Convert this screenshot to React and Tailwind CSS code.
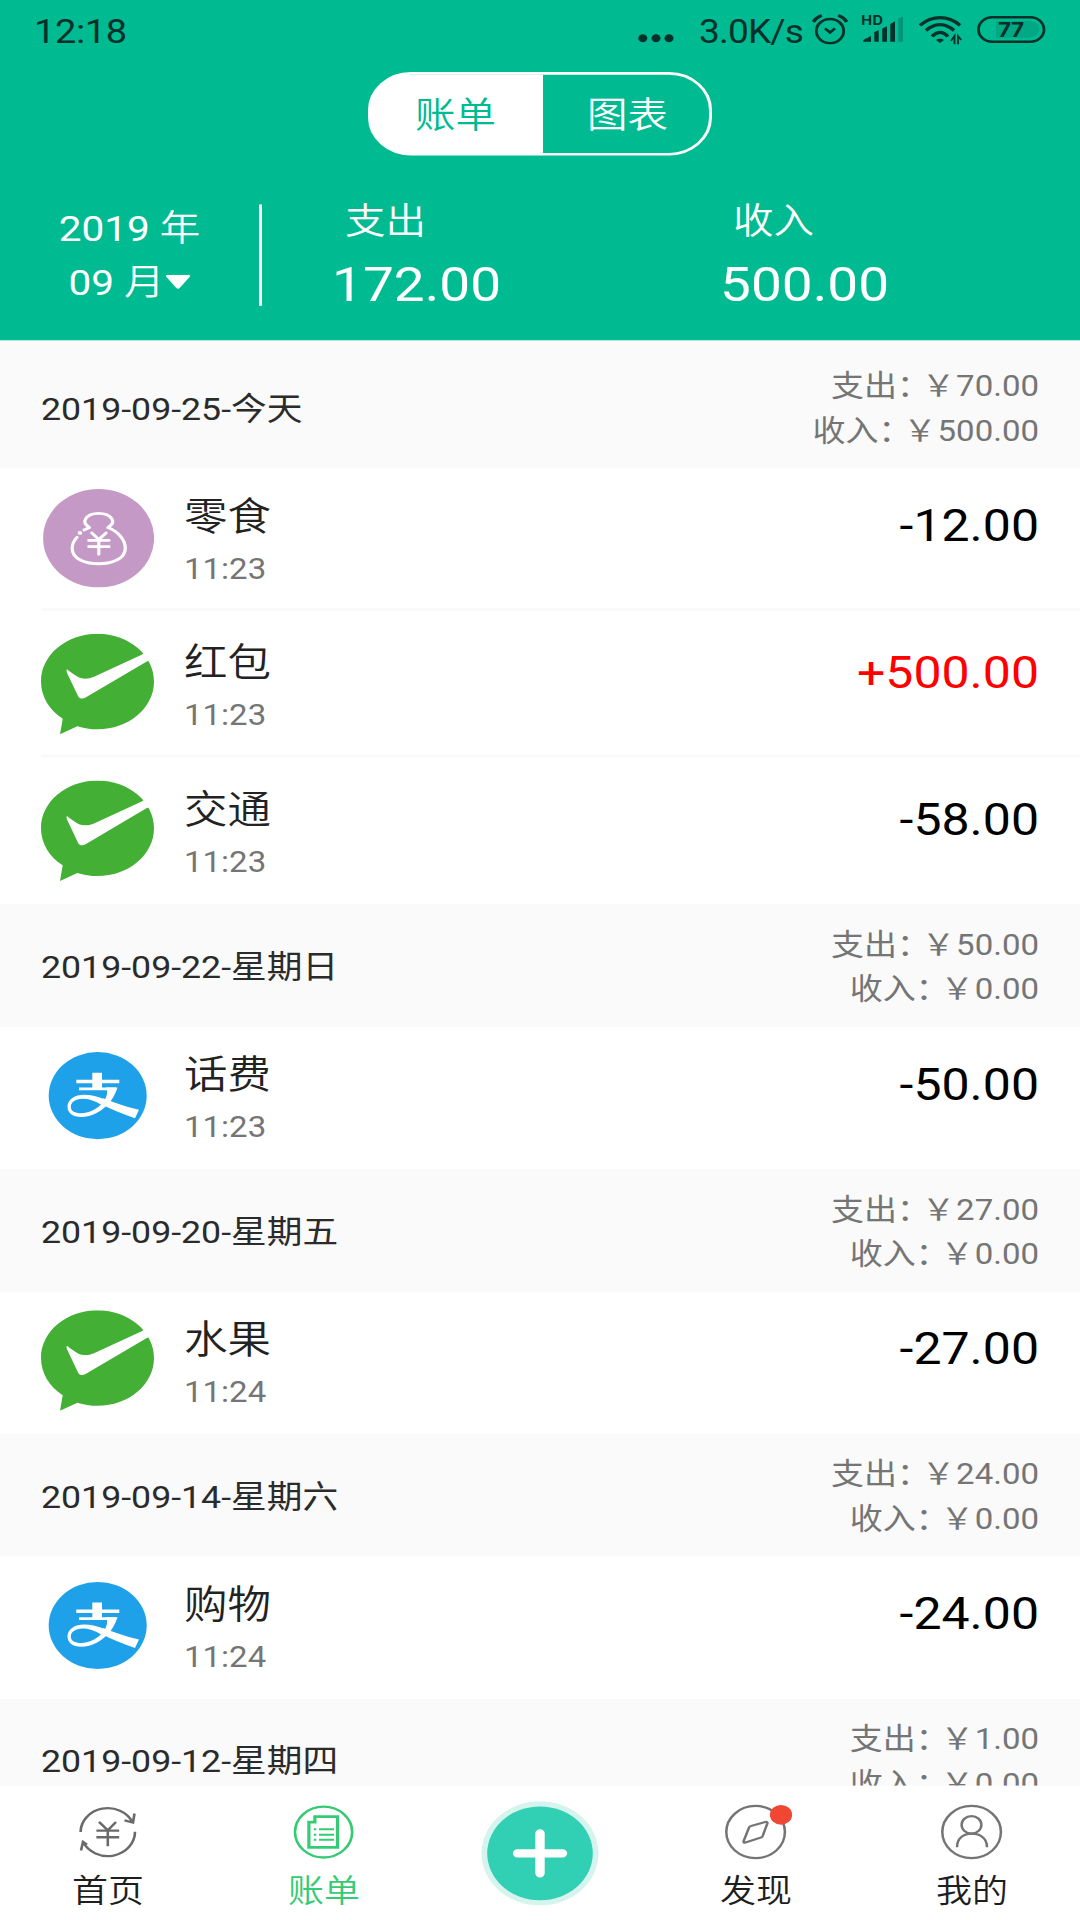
import React from "react";

const GROUPS = [
  {
    date: "2019-09-25-今天",
    expense: "70.00",
    income: "500.00",
    items: [
      { icon: "bag", name: "零食", time: "11:23", amount: "-12.00" },
      { icon: "wechat", name: "红包", time: "11:23", amount: "+500.00" },
      { icon: "wechat", name: "交通", time: "11:23", amount: "-58.00" },
    ],
  },
  {
    date: "2019-09-22-星期日",
    expense: "50.00",
    income: "0.00",
    items: [{ icon: "alipay", name: "话费", time: "11:23", amount: "-50.00" }],
  },
  {
    date: "2019-09-20-星期五",
    expense: "27.00",
    income: "0.00",
    items: [{ icon: "wechat", name: "水果", time: "11:24", amount: "-27.00" }],
  },
  {
    date: "2019-09-14-星期六",
    expense: "24.00",
    income: "0.00",
    items: [{ icon: "alipay", name: "购物", time: "11:24", amount: "-24.00" }],
  },
  {
    date: "2019-09-12-星期四",
    expense: "1.00",
    income: "0.00",
    items: [],
  },
];

function BagIcon() {
  return (
    <svg className="size-[113px]" viewBox="0 0 113 113" fill="none">
      <circle cx="57.6" cy="57.5" r="55.5" fill="#c599c5" />
      <g stroke="#fff" strokeWidth="3.2" strokeLinecap="round" strokeLinejoin="round">
        <path d="M43 48.3L48.5 45.5C44.5 42.5 42.5 39.5 44.5 36C47 31.5 52 29.6 57.5 29.6C63 29.6 68.5 31.5 71 36C73 39.5 71 42.5 66.8 45.5C77 50 84.3 58.5 84.3 69C84.3 80 72 86.2 57.5 86.2C43 86.2 31.2 80 31.2 69C31.2 64 32.8 60 36 56.5" />
        <path d="M38.8 51.6h.2" strokeWidth="4.2" />
        <path d="M50.8 51.5L57.8 59L65 51.5M47.8 60H68M47.8 67H68M57.8 59V75.5" />
      </g>
    </svg>
  );
}

function WechatIcon() {
  return (
    <svg className="size-[113px]" viewBox="0 0 113 113">
      <path
        d="M56.5 0C87.7 0 113 24 113 53.7S87.7 107.5 56.5 107.5C49.5 107.5 42.5 106.3 36.3 104L19 113L21.7 95.5C8.5 86 0 71 0 53.7C0 24 25.3 0 56.5 0Z"
        fill="#43af35"
      />
      <path
        d="M26.3 40.3C30 43.5 34 47 38 49.2C42 51.2 48 50.8 53 48.3L102.3 22.7L107.5 30L45 71.5C41.5 73.8 38.5 73.3 37 70L26 44C25.3 42 25.3 40 26.3 40.3Z"
        fill="#fff"
      />
      <path d="M101 23.4L113 17V26.5L106 31Z" fill="#fff" />
    </svg>
  );
}

function AlipayIcon() {
  return (
    <svg className="size-[113px]" viewBox="0 0 113 113" fill="none">
      <circle cx="56.7" cy="56.6" r="49" fill="#1ea1e8" />
      <path d="M51.3 30.7H61V49H51.3ZM35.3 38.6H78.3V42.7H35.3ZM38 47.4H75V50.6H38Z" fill="#fff" />
      <path d="M65 47.5H76.5C74 56 71 61 68.5 64.5C61 74 51 80.5 40 80.5C32 80.5 26.5 76 26.5 69C26.5 60.5 34 55.5 43 55.5C50 55.5 57 57.5 64 60.8C66 56.5 67 52 65 47.5Z" fill="#fff" />
      <path d="M60 66.5C53 62 47 59.8 41.5 60C34 60.2 29.8 64 29.8 69C29.8 74 34 76.3 40 76.3C48 76.3 54.5 72.5 60 66.5Z" fill="#1ea1e8" />
      <path d="M62 59.5C72 64 84 69 98 72.5L94 82C82 77.5 70 72 59 65.5Z" fill="#fff" />
    </svg>
  );
}

const ICONS = { bag: BagIcon, wechat: WechatIcon, alipay: AlipayIcon };

function StatusBar() {
  return (
    <div className="flex h-[66px] items-center pr-[34px] pl-[34px] text-[38px] leading-none text-[#04302a]">
      <span className="mt-[4px] tracking-[-0.4px]">12:18</span>
      <div className="ml-auto flex items-center">
        <svg className="mt-[19px] mr-[25px] h-[10px] w-[36px]" viewBox="0 0 36 10" fill="currentColor">
          <circle cx="4.8" cy="5" r="4.5" />
          <circle cx="18" cy="5" r="4.5" />
          <circle cx="31" cy="5" r="4.5" />
        </svg>
        <span className="mt-[4px] mr-[7px] w-[106px] text-[37px] tracking-[-0.8px] whitespace-nowrap">3.0K/s</span>
        <svg className="h-[34px] w-[36px]" viewBox="0 0 36 34" fill="none" stroke="currentColor" strokeWidth="2.8">
          <circle cx="18" cy="19" r="13.7" />
          <path d="M13 16L18 20.6L23 16" />
          <path d="M1.2 8.7C3 5.5 6 2.8 9.8 1.3M34.8 8.7C33 5.5 30 2.8 26.2 1.3" strokeWidth="3.4" />
        </svg>
        <svg className="ml-[13px] h-[34px] w-[43px] overflow-visible" viewBox="0 0 43 34" fill="currentColor">
          <text x="0.3" y="12.3" fontSize="14.5" fontWeight="700" letterSpacing="0.5" fontFamily="Inter, sans-serif">HD</text>
          <path d="M2.3 31V29L10 24.5V31ZM13.3 31V20L17.7 18V31ZM21.3 31V16L26 13.5V31ZM29.3 31V11L34 8V31Z" />
          <path d="M37.3 31V5L42 2.5V31Z" opacity="0.28" />
        </svg>
        <svg className="ml-[15px] h-[34px] w-[43px]" viewBox="0 0 43 34" fill="none" stroke="currentColor" strokeWidth="3.6">
          <path d="M1 12.5C13 1 29 1 41 12.5M7 18.5C15.5 9.5 26.5 9.5 35 18.5M13 25C18 18.8 24 18.8 29 25" />
          <path d="M17 29C19 27.2 23 27.2 25 29L21 32.5Z" fill="currentColor" stroke="none" />
          <path d="M35.5 34V24.5L32 30M39 34V24.5L42.3 29" strokeWidth="1.9" />
        </svg>
        <svg className="ml-[15px] h-[34px] w-[69px]" viewBox="0 0 69 34">
          <rect x="1.5" y="3.5" width="65.5" height="27.5" rx="13.7" fill="none" stroke="currentColor" strokeWidth="2.8" />
          <path d="M19 7.5H53A9.5 9.5 0 0 1 53 26.5H19Z" fill="currentColor" opacity="0.13" />
          <text x="33.8" y="25.3" textAnchor="middle" fontSize="22.5" fontWeight="700" letterSpacing="-0.5" fontFamily="Inter, sans-serif" fill="currentColor">77</text>
        </svg>
      </div>
    </div>
  );
}

function Header() {
  return (
    <header className="h-[383px] shrink-0 bg-[#00bb92] text-white">
      <StatusBar />
      <div className="mx-auto mt-[15px] flex h-[94px] w-[344px] overflow-hidden rounded-[43px] border-[3px] border-white bg-[linear-gradient(90deg,#fff_50%,#00bb92_50%)] text-[40.5px] leading-none font-[350]">
        <div className="flex w-[172px] items-center justify-center bg-white pt-[4px] pr-[3px] text-[#00bb92]">账单</div>
        <div className="flex flex-1 items-center justify-center pt-[4px] pl-[3px]">图表</div>
      </div>
      <div className="mt-[55px] flex h-[114px] text-[40.5px] leading-none">
        <div className="flex w-[259px] flex-col items-center">
          <div className="mt-[7px]">
            2019 <span className="font-[350]">年</span>
          </div>
          <div className="mt-[20px] flex items-center">
            <span>
              09 <span className="font-[350]">月</span>
            </span>
            <svg className="h-[17px] w-[26px]" viewBox="0 0 26 18" fill="#fff">
              <path d="M2 0H24Q27 0.5 25 3L15 15.5Q13 18 11 15.5L1 3Q-1 0.5 2 0Z" />
            </svg>
          </div>
        </div>
        <div className="w-[3px] bg-white" />
        <div className="flex w-[388px] flex-col pl-[70px]">
          <span className="mt-[-1px] pl-[13px] font-[350]">支出</span>
          <span className="mt-[23px] text-[55px]">172.00</span>
        </div>
        <div className="flex flex-col pl-[70px]">
          <span className="mt-[-1px] pl-[13px] font-[350]">收入</span>
          <span className="mt-[23px] text-[55px]">500.00</span>
        </div>
      </div>
    </header>
  );
}

function Total({ label, value }) {
  return (
    <div className="flex h-[50px] items-center justify-end">
      {label}：<span className="-ml-[8px] pr-px">￥</span>
      {value}
    </div>
  );
}

function BillItem({ item, last }) {
  const Icon = ICONS[item.icon];
  const isIncome = item.amount.startsWith("+");
  return (
    <div className="flex h-[165px] flex-col pl-[41px]">
      <div className="flex flex-1 pt-[26px] pr-[41px]">
        <Icon />
        <div className="ml-[30px] flex flex-col leading-none">
          <span className="mt-[12px] text-[43.5px] font-[350] text-[#222]">{item.name}</span>
          <span className="mt-[19px] text-[33px] text-[#757575]">{item.time}</span>
        </div>
        <span className={`mt-[19px] ml-auto text-[50px] leading-none ${isIncome ? "text-[#ff0000]" : "text-black"}`}>
          {item.amount}
        </span>
      </div>
      {!last && <div className="h-[3px] bg-[#f9f9f9]" />}
    </div>
  );
}

function BillGroup({ group }) {
  return (
    <section>
      <div className="flex h-[138px] items-center justify-between bg-[#fafafa] pt-[2px] pr-[41px] pl-[41px] leading-none">
        <span className="pt-[3px] text-[35.7px] text-[#2b2b2b]">{group.date}</span>
        <div className="text-[33px] text-[#757575]">
          <Total label="支出" value={group.expense} />
          <Total label="收入" value={group.income} />
        </div>
      </div>
      <div className="mt-[-5px]">
        {group.items.map((item, i) => (
          <BillItem key={i} item={item} last={i === group.items.length - 1} />
        ))}
      </div>
    </section>
  );
}

function HomeIcon() {
  return (
    <svg className="size-[60px] overflow-visible" viewBox="0 0 60 60" fill="none" stroke="#6a6a6a" strokeWidth="2.6">
      <path d="M2.6 30A27.2 27.2 0 0 1 54.5 19M56.5 9.2L55 19.4L46.5 17" />
      <path d="M57 29.8A27.2 27.2 0 0 1 5 41M3 50.9L5 41L9 44.2" />
      <path d="M21 18.6L29.8 28.1L38 18.6M18.4 28.4H41.2M18.4 35.9H41.2M29.8 28V46" />
    </svg>
  );
}

function BillIcon() {
  return (
    <svg className="size-[60px] overflow-visible" viewBox="0 0 60 60" fill="none" stroke="#35cb75" strokeWidth="2.7">
      <circle cx="29.6" cy="30" r="28.6" />
      <path d="M20.9 12.6H43.5V47.2H14.9V18.9H20.9Z" strokeWidth="3.2" />
      <path d="M19.8 26.8h2.5M19.8 33h2.5M19.8 38.8h2.5M25 26.8H40M25 33H40M25 38.8H40" strokeWidth="2.2" />
    </svg>
  );
}

function CompassIcon() {
  return (
    <svg className="size-[60px] overflow-visible" viewBox="0 0 60 60" fill="none" stroke="#747474" strokeWidth="2.5">
      <circle cx="29.6" cy="30" r="29.3" />
      <path d="M25 23.2L39.5 18.7Q42 18.2 41.3 20.6L36.6 34.7Q36.2 35.8 35 36.2L19.5 41.7Q17 42.4 17.7 40L23.2 24.5Q23.7 23.5 25 23.2Z" />
      <circle cx="55" cy="10.6" r="11.1" fill="#f04734" stroke="none" />
    </svg>
  );
}

function MineIcon() {
  return (
    <svg className="size-[60px] overflow-visible" viewBox="0 0 60 60" fill="none" stroke="#747474" strokeWidth="2.5">
      <circle cx="29.6" cy="30" r="29.3" />
      <circle cx="29.5" cy="21.9" r="9.9" />
      <path d="M15 47C15 37.6 21 31.8 29.8 31.8S45 37.6 45 47" />
    </svg>
  );
}

function PlusIcon() {
  return (
    <svg className="size-[118px]" viewBox="0 0 118 118">
      <circle cx="59" cy="59" r="58.5" fill="#d5f4ee" />
      <circle cx="59" cy="59" r="52.8" fill="#31cfb4" />
      <path d="M36.5 59H81.5M59 36.5V81.5" stroke="#fff" strokeWidth="9.4" strokeLinecap="round" />
    </svg>
  );
}

function NavItem({ icon, label, active }) {
  return (
    <div className={`flex flex-1 flex-col items-center pt-[22px] text-[36px] leading-none font-[350] ${active ? "text-[#35cb75]" : "text-[#1e1e1e]"}`}>
      {icon}
      <span className="mt-[19px]">{label}</span>
    </div>
  );
}

function BottomNav() {
  return (
    <nav className="flex h-[151px] shrink-0 bg-white">
      <NavItem icon={<HomeIcon />} label="首页" />
      <NavItem icon={<BillIcon />} label="账单" active />
      <div className="flex flex-1 justify-center pt-[17px]">
        <PlusIcon />
      </div>
      <NavItem icon={<CompassIcon />} label="发现" />
      <NavItem icon={<MineIcon />} label="我的" />
    </nav>
  );
}

export default function App() {
  return (
    <div className="h-[1920px] w-[1080px] overflow-hidden">
      {/* 1080x2160 phone screen, squeezed to 16:9 */}
      <div className="flex h-[2160px] w-[1080px] origin-top scale-y-[0.8889] flex-col bg-white font-[Roboto,'Noto_Sans_CJK_SC',sans-serif]">
        <Header />
        <main className="min-h-0 flex-1 overflow-hidden">
          <div className="h-[6px] bg-[#fafafa]" />
          {GROUPS.map((group) => (
            <BillGroup key={group.date} group={group} />
          ))}
        </main>
        <BottomNav />
      </div>
    </div>
  );
}
